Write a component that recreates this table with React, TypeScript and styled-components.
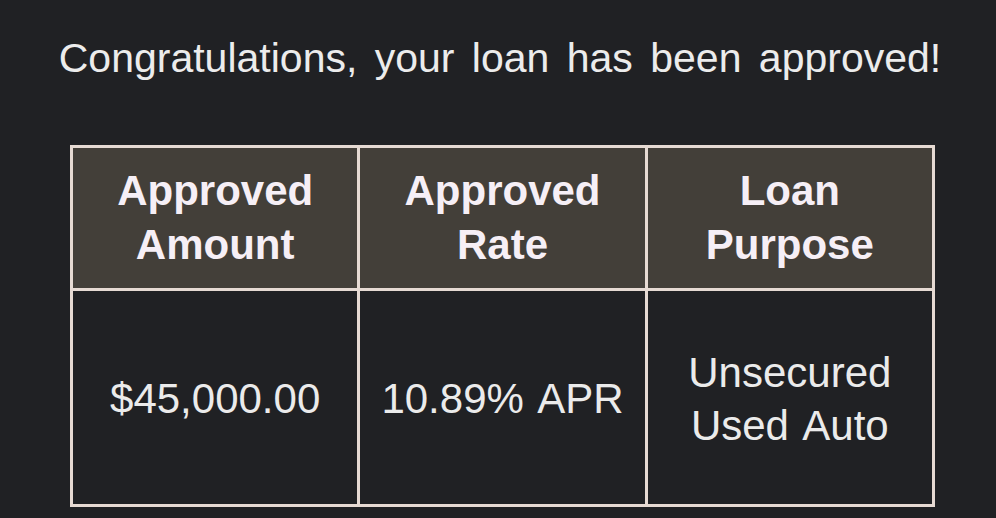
import styled, { createGlobalStyle } from "styled-components";

const GlobalStyle = createGlobalStyle`
  html, body {
    margin: 0;
    padding: 0;
    background: #202124;
  }
  body {
    font-family: "Liberation Sans", Arial, sans-serif;
  }
`;

const SPage = styled.div`
  width: 996px;
  height: 518px;
  background: #202124;
  padding-top: 34px;
  box-sizing: border-box;
  overflow: hidden;
`;

const STitle = styled.h1`
  margin: 0 0 62px;
  text-align: center;
  font-size: 41px;
  line-height: 49px;
  font-weight: 400;
  word-spacing: 6px;
  color: #ececec;
  padding-left: 4px;
`;

const STable = styled.table`
  width: 865px;
  margin-left: 70px;
  border-collapse: collapse;
  table-layout: fixed;
`;

const SHeadCell = styled.th`
  height: 140px;
  padding: 0;
  border: 3px solid #e6dad3;
  background: #433f39;
  color: #f6eff6;
  font-size: 42px;
  line-height: 54px;
  font-weight: 700;
  text-align: center;
  vertical-align: middle;
`;

const SCell = styled.td`
  height: 211px;
  padding: 2px 0 0;
  border: 3px solid #e6dad3;
  background: #202124;
  color: #ebebeb;
  font-size: 42px;
  line-height: 53px;
  word-spacing: 4px;
  text-align: center;
  vertical-align: middle;
`;

const columns = [
  { head: ["Approved", "Amount"], value: ["$45,000.00"] },
  { head: ["Approved", "Rate"], value: ["10.89% APR"] },
  { head: ["Loan", "Purpose"], value: ["Unsecured", "Used Auto"] },
];

function App() {
  return (
    <SPage>
      <GlobalStyle />
      <STitle>Congratulations, your loan has been approved!</STitle>
      <STable>
        <thead>
          <tr>
            {columns.map((col) => (
              <SHeadCell key={col.head.join(" ")}>
                {col.head[0]}
                <br />
                {col.head[1]}
              </SHeadCell>
            ))}
          </tr>
        </thead>
        <tbody>
          <tr>
            {columns.map((col) => (
              <SCell key={col.value.join(" ")}>
                {col.value.map((line, i) => (
                  <div key={i}>{line}</div>
                ))}
              </SCell>
            ))}
          </tr>
        </tbody>
      </STable>
    </SPage>
  );
}

export default App;
